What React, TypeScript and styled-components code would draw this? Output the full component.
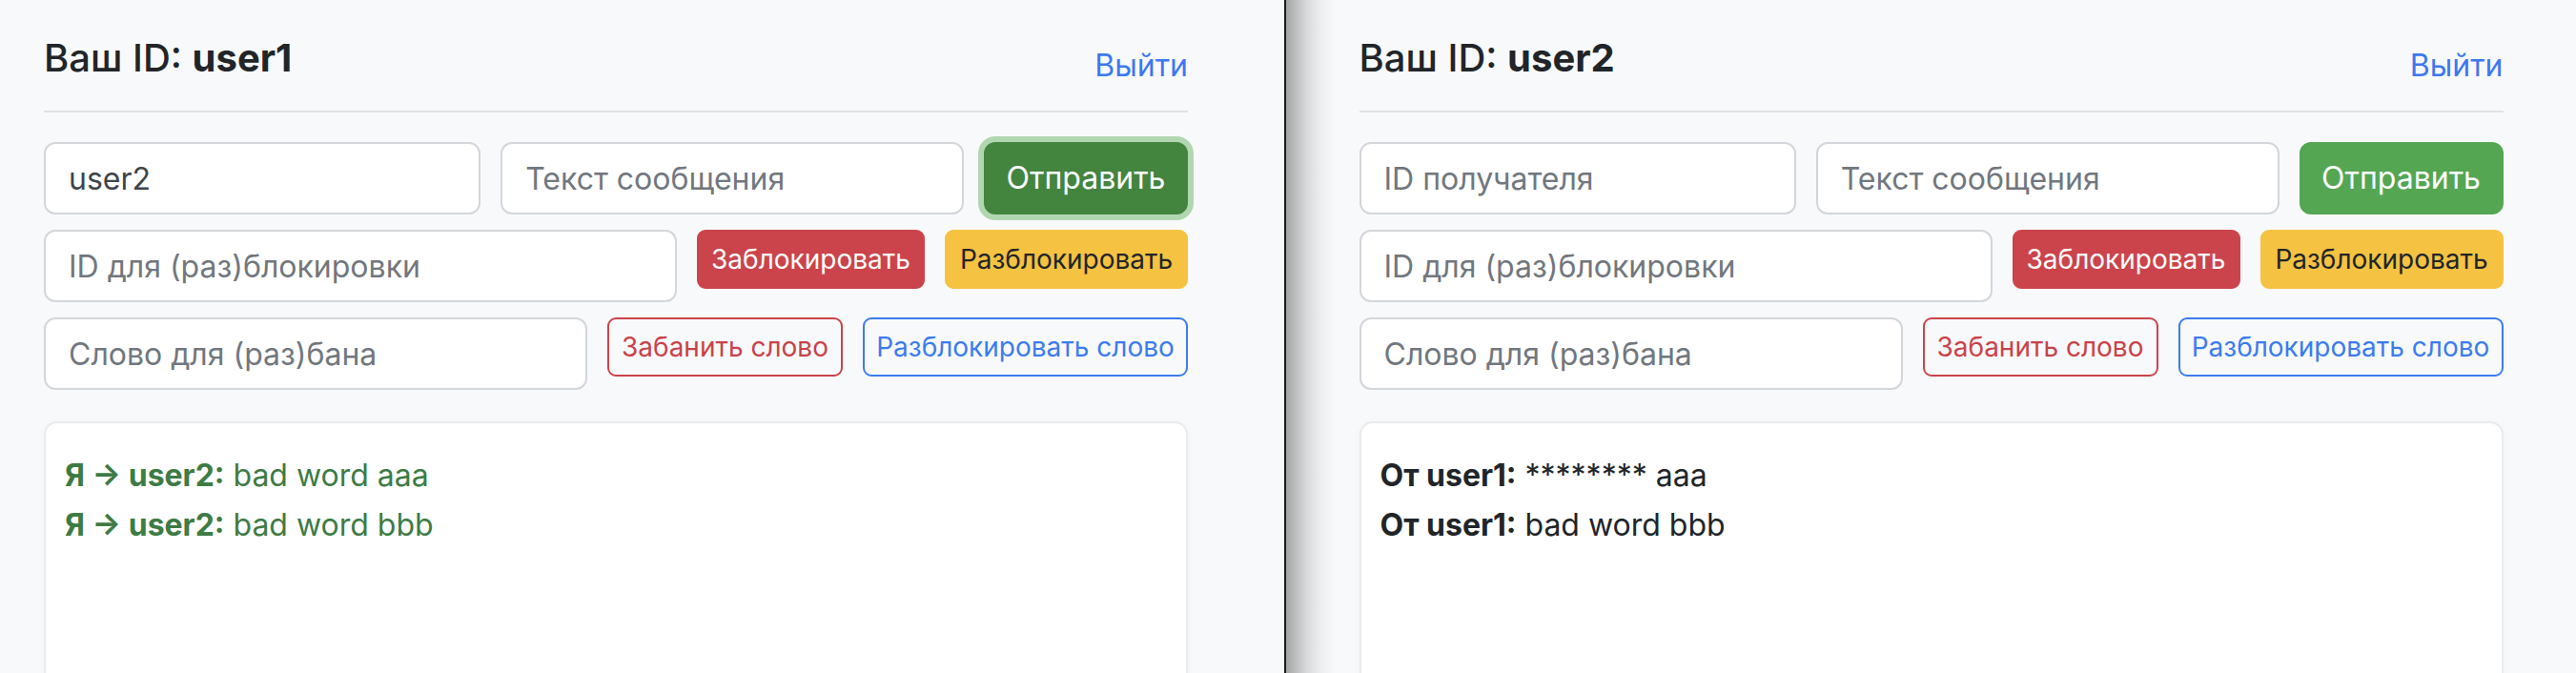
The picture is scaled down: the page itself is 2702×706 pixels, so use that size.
import React from 'react';
import styled, { createGlobalStyle, css } from 'styled-components';

const GlobalStyle = createGlobalStyle`
  html, body {
    margin: 0;
    padding: 0;
    background: #f8f9fa;
  }
  body {
    font-family: Inter, 'Noto Sans', 'Liberation Sans', sans-serif;
    color: #212529;
  }
  * {
    box-sizing: border-box;
  }
`;

const Screen = styled.div`
  display: flex;
  height: 100vh;
  overflow: hidden;
  background: #f8f9fa;
`;

const Window = styled.section<{ $first?: boolean }>`
  padding-top: 37px;
  ${(p) =>
    p.$first
      ? css`
          flex: none;
          width: 1349px;
          padding-left: 46px;
          border-right: 2px solid #1b1b1b;
        `
      : css`
          flex: 1;
          background: linear-gradient(
            to right,
            rgba(0, 0, 0, 0.34) 0,
            rgba(0, 0, 0, 0.25) 9px,
            rgba(0, 0, 0, 0.12) 22px,
            rgba(0, 0, 0, 0.04) 38px,
            rgba(0, 0, 0, 0) 52px
          );
        `}
`;

const Container = styled.div<{ $first?: boolean }>`
  width: 1200px;
  margin: ${(p) => (p.$first ? '0' : '0 auto')};
`;

const Header = styled.header`
  display: flex;
  justify-content: space-between;
  align-items: center;
  padding-bottom: 15px;
  border-bottom: 2px solid #dee2e6;
  margin-bottom: 31px;
`;

const Title = styled.h5`
  margin: 0 0 16px;
  font-size: 40px;
  line-height: 48px;
  font-weight: 500;
  color: #212529;

  b {
    font-weight: 700;
  }
`;

const LogoutLink = styled.a`
  font-size: 32px;
  line-height: 48px;
  color: #3b79f0;
  text-decoration: none;
  cursor: pointer;
`;

const Form = styled.div`
  display: flex;
  flex-direction: column;
  gap: 16px;
`;

const Row = styled.div`
  display: flex;
  align-items: flex-start;
  gap: 21px;
`;

const Input = styled.input`
  flex: ${(p: { $grow?: number }) => p.$grow ?? 1} 1 0;
  min-width: 0;
  height: 76px;
  padding: 12px 24px;
  font-family: inherit;
  font-size: 32px;
  line-height: 48px;
  color: #3f444a;
  background: #fff;
  border: 2px solid #d3d6da;
  border-radius: 12px;
  outline: none;

  &::placeholder {
    color: #71777e;
  }
`;

type Variant = 'success' | 'successActive' | 'danger' | 'warning' | 'outlineDanger' | 'outlinePrimary';

const variants: Record<Variant, ReturnType<typeof css>> = {
  success: css`
    background: #54a653;
    border-color: #54a653;
    color: #fff;
  `,
  successActive: css`
    background: #43843f;
    border-color: #43843f;
    color: #fff;
    box-shadow: 0 0 0 6px #b1d7b1;
  `,
  danger: css`
    background: #cb444b;
    border-color: #cb444b;
    color: #fff;
  `,
  warning: css`
    background: #f5c242;
    border-color: #f5c242;
    color: #212529;
  `,
  outlineDanger: css`
    background: transparent;
    border-color: #cb444b;
    color: #c9424a;
  `,
  outlinePrimary: css`
    background: transparent;
    border-color: #3b7cf0;
    color: #3b7cf0;
  `,
};

const Button = styled.button<{ $variant: Variant; $w: number; $small?: boolean }>`
  flex: none;
  width: ${(p) => p.$w}px;
  height: ${(p) => (p.$small ? 62 : 76)}px;
  padding: 0;
  font-family: inherit;
  font-size: ${(p) => (p.$small ? 28 : 32)}px;
  line-height: 1;
  font-weight: 400;
  border: 2px solid transparent;
  border-radius: ${(p) => (p.$small ? 9 : 12)}px;
  white-space: nowrap;
  cursor: pointer;
  ${(p) => variants[p.$variant]}
`;

const Card = styled.div`
  margin-top: 33px;
  min-height: 420px;
  padding: 29px 20px;
  background: #fff;
  border: 2px solid #ebebec;
  border-radius: 14px;
  box-shadow: 0 2px 10px rgba(0, 0, 0, 0.03);
`;

const Message = styled.div<{ $mine?: boolean }>`
  font-size: 32px;
  line-height: 52px;
  color: ${(p) => (p.$mine ? '#3e7b45' : '#212529')};

  b {
    font-weight: 700;
  }
`;

type Msg = { mine: boolean; head: string; text: string };

type PanelProps = {
  first?: boolean;
  user: string;
  recipient: string;
  sendActive?: boolean;
  messages: Msg[];
};

const Panel: React.FC<PanelProps> = ({ first, user, recipient, sendActive, messages }) => (
  <Window $first={first}>
    <Container $first={first}>
      <Header>
        <Title>
          Ваш ID: <b>{user}</b>
        </Title>
        <LogoutLink>Выйти</LogoutLink>
      </Header>

      <Form>
        <Row>
          <Input $grow={456} placeholder="ID получателя" defaultValue={recipient} />
          <Input $grow={487} placeholder="Текст сообщения" />
          <Button $variant={sendActive ? 'successActive' : 'success'} $w={214}>
            Отправить
          </Button>
        </Row>
        <Row>
          <Input placeholder="ID для (раз)блокировки" />
          <Button $small $variant="danger" $w={239}>
            Заблокировать
          </Button>
          <Button $small $variant="warning" $w={255}>
            Разблокировать
          </Button>
        </Row>
        <Row>
          <Input placeholder="Слово для (раз)бана" />
          <Button $small $variant="outlineDanger" $w={247}>
            Забанить слово
          </Button>
          <Button $small $variant="outlinePrimary" $w={341}>
            Разблокировать слово
          </Button>
        </Row>
      </Form>

      <Card>
        {messages.map((m, i) => (
          <Message key={i} $mine={m.mine}>
            <b>{m.head}</b> {m.text}
          </Message>
        ))}
      </Card>
    </Container>
  </Window>
);

const App: React.FC = () => (
  <>
    <GlobalStyle />
    <Screen>
      <Panel
        first
        user="user1"
        recipient="user2"
        sendActive
        messages={[
          { mine: true, head: 'Я → user2:', text: 'bad word aaa' },
          { mine: true, head: 'Я → user2:', text: 'bad word bbb' },
        ]}
      />
      <Panel
        user="user2"
        recipient=""
        messages={[
          { mine: false, head: 'От user1:', text: '******** aaa' },
          { mine: false, head: 'От user1:', text: 'bad word bbb' },
        ]}
      />
    </Screen>
  </>
);

export default App;
